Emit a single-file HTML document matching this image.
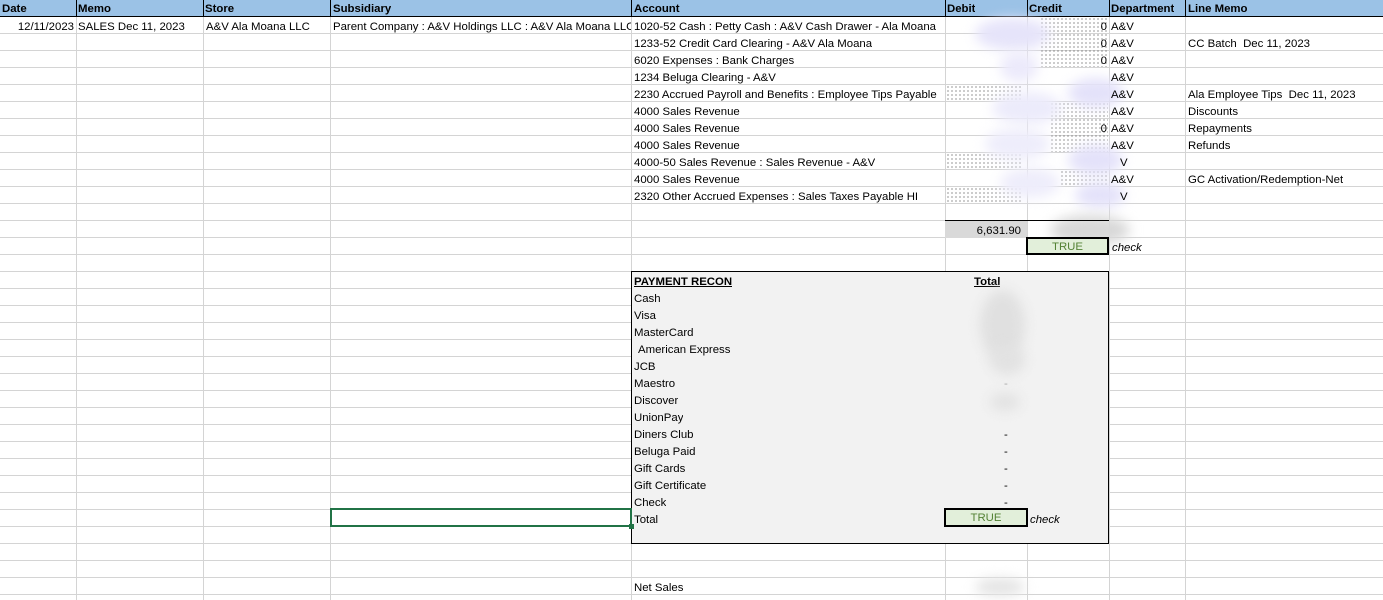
<!DOCTYPE html>
<html><head><meta charset="utf-8"><style>
body{margin:0;width:1383px;height:600px;overflow:hidden;background:#fff;font-family:"Liberation Sans",sans-serif;font-size:11.4px;color:#000;position:relative}
.grid{position:absolute;left:0;top:0;width:1383px;height:600px;
background-image:linear-gradient(to bottom,transparent 16px,#d4d4d4 16px,#d4d4d4 17px,transparent 17px);background-size:1383px 17px;}
.v{position:absolute;top:0;height:600px;width:1px;background:#d4d4d4}
.hdr{position:absolute;left:0;top:0;width:1383px;height:16px;background:#9bc2e6;border-bottom:1px solid #000}
.hv{position:absolute;top:0;height:16px;width:1px;background:#000}
.t{position:absolute;height:17px;line-height:17px;white-space:nowrap;overflow:hidden;padding-top:2px;box-sizing:border-box;height:17px}
.b{font-weight:bold}
.r{text-align:right}
.dots{position:absolute;background-image:radial-gradient(circle,#444 0.55px,transparent 0.8px);background-size:4px 4px}
.blob{position:absolute;border-radius:50%;filter:blur(6px)}
</style></head><body>
<div class="grid"></div>
<div class="v" style="left:76px"></div><div class="v" style="left:203px"></div><div class="v" style="left:330px"></div><div class="v" style="left:631px"></div><div class="v" style="left:945px"></div><div class="v" style="left:1027px"></div><div class="v" style="left:1109px"></div><div class="v" style="left:1185px"></div>
<div class="hdr"></div>
<div class="hv" style="left:76px"></div><div class="hv" style="left:203px"></div><div class="hv" style="left:330px"></div><div class="hv" style="left:631px"></div><div class="hv" style="left:945px"></div><div class="hv" style="left:1027px"></div><div class="hv" style="left:1109px"></div><div class="hv" style="left:1185px"></div>
<div class="t b" style="left:2px;top:0;padding-top:1px">Date</div>
<div class="t b" style="left:78px;top:0;padding-top:1px">Memo</div>
<div class="t b" style="left:205px;top:0;padding-top:1px">Store</div>
<div class="t b" style="left:333px;top:0;padding-top:1px">Subsidiary</div>
<div class="t b" style="left:634px;top:0;padding-top:1px">Account</div>
<div class="t b" style="left:947px;top:0;padding-top:1px">Debit</div>
<div class="t b" style="left:1029px;top:0;padding-top:1px">Credit</div>
<div class="t b" style="left:1111px;top:0;padding-top:1px">Department</div>
<div class="t b" style="left:1188px;top:0;padding-top:1px">Line Memo</div>

<div class="dots" style="left:1040px;top:17px;width:68px;height:50px"></div>
<div class="dots" style="left:946px;top:85px;width:75px;height:17px"></div>
<div class="dots" style="left:1050px;top:102px;width:58px;height:50px"></div>
<div class="dots" style="left:946px;top:153px;width:75px;height:17px"></div>
<div class="dots" style="left:1060px;top:170px;width:48px;height:17px"></div>
<div class="dots" style="left:946px;top:187px;width:75px;height:17px"></div>
<div class="blob" style="left:975px;top:18px;width:75px;height:32px;background:#e6e4fa"></div>
<div class="blob" style="left:1000px;top:52px;width:38px;height:30px;background:#eceafb"></div>
<div class="blob" style="left:1068px;top:78px;width:55px;height:30px;background:#e4e2fa"></div>
<div class="blob" style="left:992px;top:92px;width:70px;height:32px;background:#ecebfb"></div>
<div class="blob" style="left:985px;top:128px;width:65px;height:32px;background:#eeedfb"></div>
<div class="blob" style="left:1068px;top:145px;width:55px;height:30px;background:#e4e2fa"></div>
<div class="blob" style="left:1000px;top:168px;width:60px;height:30px;background:#eeedfb"></div>
<div class="blob" style="left:1075px;top:182px;width:50px;height:26px;background:#e4e2fa"></div>
<div class="blob" style="left:1050px;top:215px;width:80px;height:30px;background:#d8d8d8"></div>

<div class="t r" style="left:0;width:74px;top:17px">12/11/2023</div>
<div class="t" style="left:78px;top:17px">SALES Dec 11, 2023</div>
<div class="t" style="left:206px;top:17px">A&amp;V Ala Moana LLC</div>
<div class="t" style="left:333px;top:17px;width:298px">Parent Company : A&amp;V Holdings LLC : A&amp;V Ala Moana LLC</div>
<div class="t" style="left:634px;top:17px;width:310px">1020-52 Cash : Petty Cash : A&amp;V Cash Drawer - Ala Moana</div>
<div class="t" style="left:634px;top:34px">1233-52 Credit Card Clearing - A&amp;V Ala Moana</div>
<div class="t" style="left:634px;top:51px">6020 Expenses : Bank Charges</div>
<div class="t" style="left:634px;top:68px">1234 Beluga Clearing - A&amp;V</div>
<div class="t" style="left:634px;top:85px;width:311px">2230 Accrued Payroll and Benefits : Employee Tips Payable</div>
<div class="t" style="left:634px;top:102px">4000 Sales Revenue</div>
<div class="t" style="left:634px;top:119px">4000 Sales Revenue</div>
<div class="t" style="left:634px;top:136px">4000 Sales Revenue</div>
<div class="t" style="left:634px;top:153px">4000-50 Sales Revenue : Sales Revenue - A&amp;V</div>
<div class="t" style="left:634px;top:170px">4000 Sales Revenue</div>
<div class="t" style="left:634px;top:187px">2320 Other Accrued Expenses : Sales Taxes Payable HI</div>
<div class="t r" style="left:1027px;width:80px;top:17px">0</div>
<div class="t r" style="left:1027px;width:80px;top:34px">0</div>
<div class="t r" style="left:1027px;width:80px;top:51px">0</div>
<div class="t r" style="left:1027px;width:80px;top:119px">0</div>
<div class="t" style="left:1111px;top:17px">A&amp;V</div>
<div class="t" style="left:1111px;top:34px">A&amp;V</div>
<div class="t" style="left:1111px;top:51px">A&amp;V</div>
<div class="t" style="left:1111px;top:68px">A&amp;V</div>
<div class="t" style="left:1111px;top:85px">A&amp;V</div>
<div class="t" style="left:1111px;top:102px">A&amp;V</div>
<div class="t" style="left:1111px;top:119px">A&amp;V</div>
<div class="t" style="left:1111px;top:136px">A&amp;V</div>
<div class="t" style="left:1120px;top:153px">V</div>
<div class="t" style="left:1111px;top:170px">A&amp;V</div>
<div class="t" style="left:1120px;top:187px">V</div>
<div class="t" style="left:1188px;top:34px">CC Batch&nbsp; Dec 11, 2023</div>
<div class="t" style="left:1188px;top:85px">Ala Employee Tips&nbsp; Dec 11, 2023</div>
<div class="t" style="left:1188px;top:102px">Discounts</div>
<div class="t" style="left:1188px;top:119px">Repayments</div>
<div class="t" style="left:1188px;top:136px">Refunds</div>
<div class="t" style="left:1188px;top:170px">GC Activation/Redemption-Net</div>

<div style="position:absolute;left:945px;top:220px;width:164px;height:1px;background:#000"></div>
<div class="t r" style="left:945px;top:221px;width:82px;background:#d9d9d9;padding-right:6px">6,631.90</div>
<div style="position:absolute;left:1026px;top:237px;width:83px;height:18px;box-sizing:border-box;border:2px solid #000;background:#e2efda;color:#548235;text-align:center;line-height:16px">TRUE</div>
<div class="t" style="left:1112px;top:238px;font-style:italic">check</div>

<div style="position:absolute;left:631px;top:271px;width:478px;height:273px;box-sizing:border-box;border:1px solid #000;background:#f2f2f2"></div>
<div class="t b" style="left:634px;top:272px;text-decoration:underline">PAYMENT RECON</div>
<div class="t b" style="left:974px;top:272px;text-decoration:underline">Total</div>
<div class="t" style="left:634px;top:289px">Cash</div>
<div class="t" style="left:634px;top:306px">Visa</div>
<div class="t" style="left:634px;top:323px">MasterCard</div>
<div class="t" style="left:638px;top:340px">American Express</div>
<div class="t" style="left:634px;top:357px">JCB</div>
<div class="t" style="left:634px;top:374px">Maestro</div>
<div class="t" style="left:634px;top:391px">Discover</div>
<div class="t" style="left:634px;top:408px">UnionPay</div>
<div class="t" style="left:634px;top:425px">Diners Club</div>
<div class="t" style="left:634px;top:442px">Beluga Paid</div>
<div class="t" style="left:634px;top:459px">Gift Cards</div>
<div class="t" style="left:634px;top:476px">Gift Certificate</div>
<div class="t" style="left:634px;top:493px">Check</div>
<div class="t" style="left:634px;top:510px">Total</div>
<div class="blob" style="left:980px;top:290px;width:45px;height:70px;background:#e0e0e0"></div>
<div class="blob" style="left:990px;top:345px;width:35px;height:30px;background:#e2e2e2"></div>
<div class="blob" style="left:990px;top:393px;width:30px;height:18px;background:#e2e2e2"></div>
<div class="t" style="left:1004px;top:374px;color:#aaa">-</div>
<div class="t" style="left:1004px;top:425px">-</div>
<div class="t" style="left:1004px;top:442px">-</div>
<div class="t" style="left:1004px;top:459px">-</div>
<div class="t" style="left:1004px;top:476px">-</div>
<div class="t" style="left:1004px;top:493px">-</div>
<div style="position:absolute;left:944px;top:508px;width:84px;height:19px;box-sizing:border-box;border:2px solid #000;background:#e2efda;color:#548235;text-align:center;line-height:17px">TRUE</div>
<div class="t" style="left:1030px;top:510px;font-style:italic">check</div>
<div style="position:absolute;left:330px;top:508px;width:302px;height:19px;box-sizing:border-box;border:2px solid #217346"></div>
<div style="position:absolute;left:629px;top:524px;width:5px;height:5px;background:#217346"></div>

<div class="t" style="left:634px;top:578px">Net Sales</div>
<div class="blob" style="left:975px;top:578px;width:50px;height:18px;background:#e4e4e4"></div>
</body></html>
